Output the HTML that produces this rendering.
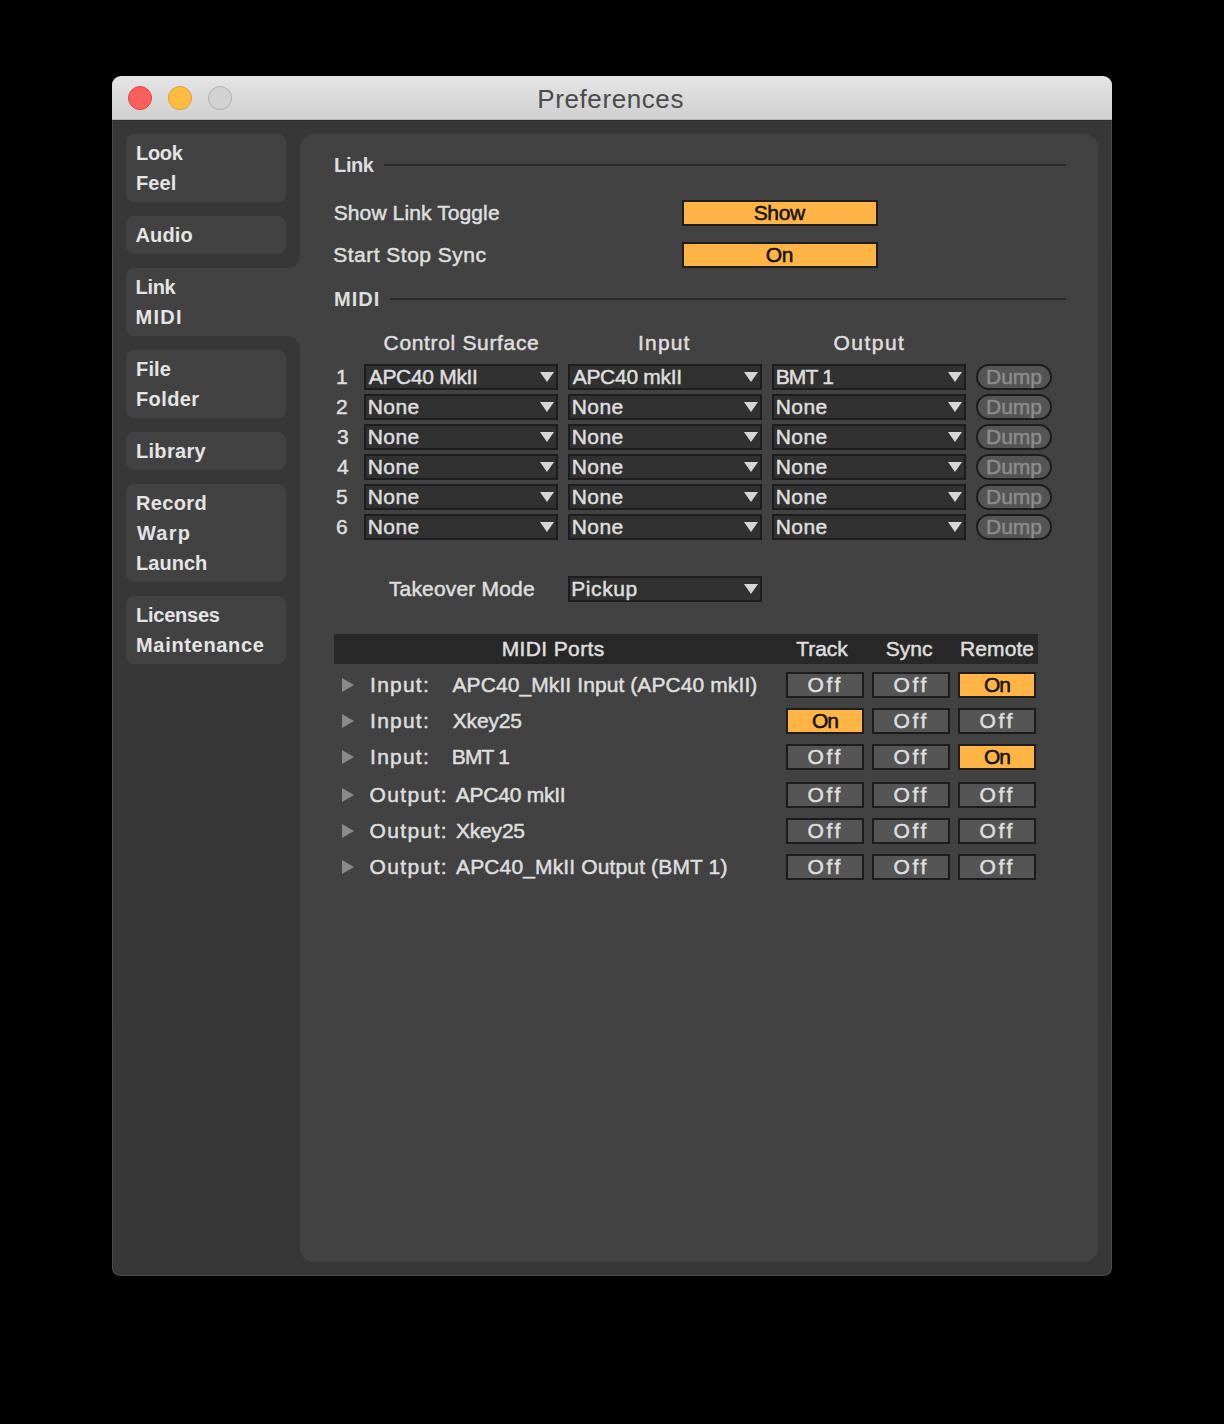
<!DOCTYPE html><html><head><meta charset='utf-8'><title>Preferences</title><style>
*{box-sizing:border-box;margin:0;padding:0}
html,body{width:1224px;height:1424px;background:#000;overflow:hidden}
body{position:relative;font-family:"Liberation Sans",sans-serif}
.a{position:absolute}
.t{position:absolute;white-space:pre;line-height:1;-webkit-text-stroke:0.5px currentColor;font-variant-ligatures:none}
.win{position:absolute;left:112px;top:76px;width:1000px;height:1200px;border-radius:9px 9px 8px 8px;background:#373737;overflow:hidden}
.title{position:absolute;left:0;top:0;width:1000px;height:44px;background:linear-gradient(#e5e5e5,#cfcfcf);}
.light{position:absolute;width:24px;height:24px;border-radius:50%;top:10px}
.item{position:absolute;left:14px;width:160px;background:#424242;border-radius:8px}
.dd{position:absolute;width:194px;height:26px;background:#313131;border:2px solid #1d1d1d}
.dd i{position:absolute;right:2px;top:6px;width:0;height:0;border-left:7px solid transparent;border-right:7px solid transparent;border-top:10px solid #d6d6d6}
.btn{position:absolute;width:78px;height:26px;border:2px solid #1d1d1d}
.off{background:#555555}
.on{background:#ffb446}
.dump{position:absolute;left:864px;width:76px;height:26px;border:2px solid #1d1d1d;border-radius:13px;background:#555555}
.tri{position:absolute;left:230px;width:0;height:0;border-top:7px solid transparent;border-bottom:7px solid transparent;border-left:12px solid #8a8a8a}
</style></head><body>
<div class='win'>
<div class='title'>
<div class='a' style='left:0;top:43px;width:1000px;height:1px;background:#b8b8b8'></div>
<div class='light' style='left:16px;background:#fc605c;border:1px solid #df4744'></div>
<div class='light' style='left:56px;background:#fdbc40;border:1px solid #dea034'></div>
<div class='light' style='left:96px;background:#d2d2d2;border:1px solid #b0b0b0'></div>
</div>
<div class='a' style='left:188px;top:58px;width:798px;height:1128px;border-radius:14px;background:#424242'></div>
<div class='a' style='left:14px;top:192px;width:174px;height:68px;border-radius:8px 0 0 8px;background:#424242'></div>
<div class='a' style='left:175px;top:179px;width:13px;height:13px;background:#424242'></div>
<div class='a' style='left:175px;top:179px;width:13px;height:13px;background:#373737;border-radius:0 0 13px 0'></div>
<div class='a' style='left:175px;top:260px;width:13px;height:13px;background:#424242'></div>
<div class='a' style='left:175px;top:260px;width:13px;height:13px;background:#373737;border-radius:0 13px 0 0'></div>
<div class='item' style='top:58px;height:68px'></div>
<div class='item' style='top:140px;height:38px'></div>
<div class='item' style='top:274px;height:68px'></div>
<div class='item' style='top:356px;height:38px'></div>
<div class='item' style='top:408px;height:98px'></div>
<div class='item' style='top:520px;height:68px'></div>
<div class='a' style='left:0;top:44px;width:1000px;height:1px;background:#2e2e2e'></div>
<div class='a' style='left:0;top:44px;width:1000px;height:1156px;border:1px solid rgba(255,255,255,0.1);border-top:0;border-radius:0 0 8px 8px'></div>
<div class='a' style='left:272px;top:88px;width:682px;height:2px;background:#2a2a2a'></div>
<div class='a' style='left:278px;top:222px;width:676px;height:2px;background:#2a2a2a'></div>
<div class='btn on' style='left:570px;top:124px;width:196px'></div>
<div class='btn on' style='left:570px;top:166px;width:196px'></div>
<div class='dd' style='left:252px;top:288px'><i></i></div>
<div class='dd' style='left:456px;top:288px'><i></i></div>
<div class='dd' style='left:660px;top:288px'><i></i></div>
<div class='dump' style='top:288px'></div>
<div class='dd' style='left:252px;top:318px'><i></i></div>
<div class='dd' style='left:456px;top:318px'><i></i></div>
<div class='dd' style='left:660px;top:318px'><i></i></div>
<div class='dump' style='top:318px'></div>
<div class='dd' style='left:252px;top:348px'><i></i></div>
<div class='dd' style='left:456px;top:348px'><i></i></div>
<div class='dd' style='left:660px;top:348px'><i></i></div>
<div class='dump' style='top:348px'></div>
<div class='dd' style='left:252px;top:378px'><i></i></div>
<div class='dd' style='left:456px;top:378px'><i></i></div>
<div class='dd' style='left:660px;top:378px'><i></i></div>
<div class='dump' style='top:378px'></div>
<div class='dd' style='left:252px;top:408px'><i></i></div>
<div class='dd' style='left:456px;top:408px'><i></i></div>
<div class='dd' style='left:660px;top:408px'><i></i></div>
<div class='dump' style='top:408px'></div>
<div class='dd' style='left:252px;top:438px'><i></i></div>
<div class='dd' style='left:456px;top:438px'><i></i></div>
<div class='dd' style='left:660px;top:438px'><i></i></div>
<div class='dump' style='top:438px'></div>
<div class='dd' style='left:456px;top:500px'><i></i></div>
<div class='a' style='left:222px;top:558px;width:704px;height:30px;background:#282828'></div>
<div class='tri' style='top:602px'></div>
<div class='btn off' style='left:674px;top:596px'></div>
<div class='btn off' style='left:760px;top:596px'></div>
<div class='btn on' style='left:846px;top:596px'></div>
<div class='tri' style='top:638px'></div>
<div class='btn on' style='left:674px;top:632px'></div>
<div class='btn off' style='left:760px;top:632px'></div>
<div class='btn off' style='left:846px;top:632px'></div>
<div class='tri' style='top:674px'></div>
<div class='btn off' style='left:674px;top:668px'></div>
<div class='btn off' style='left:760px;top:668px'></div>
<div class='btn on' style='left:846px;top:668px'></div>
<div class='tri' style='top:712px'></div>
<div class='btn off' style='left:674px;top:706px'></div>
<div class='btn off' style='left:760px;top:706px'></div>
<div class='btn off' style='left:846px;top:706px'></div>
<div class='tri' style='top:748px'></div>
<div class='btn off' style='left:674px;top:742px'></div>
<div class='btn off' style='left:760px;top:742px'></div>
<div class='btn off' style='left:846px;top:742px'></div>
<div class='tri' style='top:784px'></div>
<div class='btn off' style='left:674px;top:778px'></div>
<div class='btn off' style='left:760px;top:778px'></div>
<div class='btn off' style='left:846px;top:778px'></div>
<div class='t' id='t0' style='left:24.00px;top:67.07px;font-size:20px;font-weight:700;color:#e4e4e4;letter-spacing:-0.30px;-webkit-text-stroke:0;'>Look</div>
<div class='t' id='t1' style='left:24.00px;top:97.07px;font-size:20px;font-weight:700;color:#e4e4e4;letter-spacing:0.07px;-webkit-text-stroke:0;'>Feel</div>
<div class='t' id='t2' style='left:23.50px;top:149.07px;font-size:20px;font-weight:700;color:#e4e4e4;letter-spacing:0.12px;-webkit-text-stroke:0;'>Audio</div>
<div class='t' id='t3' style='left:23.60px;top:201.07px;font-size:20px;font-weight:700;color:#e4e4e4;letter-spacing:-0.33px;-webkit-text-stroke:0;'>Link</div>
<div class='t' id='t4' style='left:23.60px;top:231.07px;font-size:20px;font-weight:700;color:#e4e4e4;letter-spacing:1.23px;-webkit-text-stroke:0;'>MIDI</div>
<div class='t' id='t5' style='left:24.00px;top:283.07px;font-size:20px;font-weight:700;color:#e4e4e4;letter-spacing:0.17px;-webkit-text-stroke:0;'>File</div>
<div class='t' id='t6' style='left:24.00px;top:313.07px;font-size:20px;font-weight:700;color:#e4e4e4;letter-spacing:0.40px;-webkit-text-stroke:0;'>Folder</div>
<div class='t' id='t7' style='left:24.00px;top:365.07px;font-size:20px;font-weight:700;color:#e4e4e4;letter-spacing:0.30px;-webkit-text-stroke:0;'>Library</div>
<div class='t' id='t8' style='left:24.00px;top:417.07px;font-size:20px;font-weight:700;color:#e4e4e4;letter-spacing:0.36px;-webkit-text-stroke:0;'>Record</div>
<div class='t' id='t9' style='left:25.00px;top:447.07px;font-size:20px;font-weight:700;color:#e4e4e4;letter-spacing:1.20px;-webkit-text-stroke:0;'>Warp</div>
<div class='t' id='t10' style='left:24.00px;top:477.07px;font-size:20px;font-weight:700;color:#e4e4e4;letter-spacing:0.04px;-webkit-text-stroke:0;'>Launch</div>
<div class='t' id='t11' style='left:24.00px;top:529.07px;font-size:20px;font-weight:700;color:#e4e4e4;letter-spacing:-0.23px;-webkit-text-stroke:0;'>Licenses</div>
<div class='t' id='t12' style='left:24.00px;top:559.07px;font-size:20px;font-weight:700;color:#e4e4e4;letter-spacing:0.68px;-webkit-text-stroke:0;'>Maintenance</div>
<div class='t' id='t13' style='left:425.30px;top:9.99px;font-size:26px;font-weight:400;color:#4b4b4b;letter-spacing:0.59px;-webkit-text-stroke:0;'>Preferences</div>
<div class='t' id='t14' style='left:222.10px;top:79.07px;font-size:20px;font-weight:700;color:#dedede;letter-spacing:-0.43px;-webkit-text-stroke:0;'>Link</div>
<div class='t' id='t15' style='left:222.00px;top:213.07px;font-size:20px;font-weight:700;color:#dedede;letter-spacing:1.00px;-webkit-text-stroke:0;'>MIDI</div>
<div class='t' id='t16' style='left:221.70px;top:126.22px;font-size:21px;font-weight:400;color:#dedede;letter-spacing:0.11px;'>Show Link Toggle</div>
<div class='t' id='t17' style='left:221.20px;top:168.22px;font-size:21px;font-weight:400;color:#dedede;letter-spacing:0.49px;'>Start Stop Sync</div>
<div class='t' id='t18' style='left:271.60px;top:256.22px;font-size:21px;font-weight:400;color:#dedede;letter-spacing:0.66px;'>Control Surface</div>
<div class='t' id='t19' style='left:526.10px;top:256.22px;font-size:21px;font-weight:400;color:#dedede;letter-spacing:1.15px;'>Input</div>
<div class='t' id='t20' style='left:721.60px;top:256.22px;font-size:21px;font-weight:400;color:#dedede;letter-spacing:1.44px;'>Output</div>
<div class='t' id='t21' style='left:641.70px;top:126.22px;font-size:21px;font-weight:400;color:#111111;letter-spacing:-0.33px;'>Show</div>
<div class='t' id='t22' style='left:653.80px;top:168.22px;font-size:21px;font-weight:400;color:#111111;letter-spacing:-0.50px;'>On</div>
<div class='t' id='t23' style='left:224.00px;top:290.22px;font-size:21px;font-weight:400;color:#dedede;letter-spacing:0.00px;'>1</div>
<div class='t' id='t24' style='left:256.70px;top:290.22px;font-size:21px;font-weight:400;color:#dedede;letter-spacing:-0.31px;'>APC40 MkII</div>
<div class='t' id='t25' style='left:460.70px;top:290.22px;font-size:21px;font-weight:400;color:#dedede;letter-spacing:-0.29px;'>APC40 mkII</div>
<div class='t' id='t26' style='left:663.70px;top:290.22px;font-size:21px;font-weight:400;color:#dedede;letter-spacing:-0.82px;'>BMT 1</div>
<div class='t' id='t27' style='left:874.00px;top:290.22px;font-size:21px;font-weight:400;color:#8c8c8c;letter-spacing:0.00px;'>Dump</div>
<div class='t' id='t28' style='left:224.00px;top:320.22px;font-size:21px;font-weight:400;color:#dedede;letter-spacing:0.00px;'>2</div>
<div class='t' id='t29' style='left:255.70px;top:320.22px;font-size:21px;font-weight:400;color:#dedede;letter-spacing:0.47px;'>None</div>
<div class='t' id='t30' style='left:459.70px;top:320.22px;font-size:21px;font-weight:400;color:#dedede;letter-spacing:0.47px;'>None</div>
<div class='t' id='t31' style='left:663.70px;top:320.22px;font-size:21px;font-weight:400;color:#dedede;letter-spacing:0.47px;'>None</div>
<div class='t' id='t32' style='left:874.00px;top:320.22px;font-size:21px;font-weight:400;color:#8c8c8c;letter-spacing:0.00px;'>Dump</div>
<div class='t' id='t33' style='left:225.00px;top:350.22px;font-size:21px;font-weight:400;color:#dedede;letter-spacing:0.00px;'>3</div>
<div class='t' id='t34' style='left:255.70px;top:350.22px;font-size:21px;font-weight:400;color:#dedede;letter-spacing:0.47px;'>None</div>
<div class='t' id='t35' style='left:459.70px;top:350.22px;font-size:21px;font-weight:400;color:#dedede;letter-spacing:0.47px;'>None</div>
<div class='t' id='t36' style='left:663.70px;top:350.22px;font-size:21px;font-weight:400;color:#dedede;letter-spacing:0.47px;'>None</div>
<div class='t' id='t37' style='left:874.00px;top:350.22px;font-size:21px;font-weight:400;color:#8c8c8c;letter-spacing:0.00px;'>Dump</div>
<div class='t' id='t38' style='left:225.00px;top:380.22px;font-size:21px;font-weight:400;color:#dedede;letter-spacing:0.00px;'>4</div>
<div class='t' id='t39' style='left:255.70px;top:380.22px;font-size:21px;font-weight:400;color:#dedede;letter-spacing:0.47px;'>None</div>
<div class='t' id='t40' style='left:459.70px;top:380.22px;font-size:21px;font-weight:400;color:#dedede;letter-spacing:0.47px;'>None</div>
<div class='t' id='t41' style='left:663.70px;top:380.22px;font-size:21px;font-weight:400;color:#dedede;letter-spacing:0.47px;'>None</div>
<div class='t' id='t42' style='left:874.00px;top:380.22px;font-size:21px;font-weight:400;color:#8c8c8c;letter-spacing:0.00px;'>Dump</div>
<div class='t' id='t43' style='left:224.00px;top:410.22px;font-size:21px;font-weight:400;color:#dedede;letter-spacing:0.00px;'>5</div>
<div class='t' id='t44' style='left:255.70px;top:410.22px;font-size:21px;font-weight:400;color:#dedede;letter-spacing:0.47px;'>None</div>
<div class='t' id='t45' style='left:459.70px;top:410.22px;font-size:21px;font-weight:400;color:#dedede;letter-spacing:0.47px;'>None</div>
<div class='t' id='t46' style='left:663.70px;top:410.22px;font-size:21px;font-weight:400;color:#dedede;letter-spacing:0.47px;'>None</div>
<div class='t' id='t47' style='left:874.00px;top:410.22px;font-size:21px;font-weight:400;color:#8c8c8c;letter-spacing:0.00px;'>Dump</div>
<div class='t' id='t48' style='left:224.00px;top:440.22px;font-size:21px;font-weight:400;color:#dedede;letter-spacing:0.00px;'>6</div>
<div class='t' id='t49' style='left:255.70px;top:440.22px;font-size:21px;font-weight:400;color:#dedede;letter-spacing:0.47px;'>None</div>
<div class='t' id='t50' style='left:459.70px;top:440.22px;font-size:21px;font-weight:400;color:#dedede;letter-spacing:0.47px;'>None</div>
<div class='t' id='t51' style='left:663.70px;top:440.22px;font-size:21px;font-weight:400;color:#dedede;letter-spacing:0.47px;'>None</div>
<div class='t' id='t52' style='left:874.00px;top:440.22px;font-size:21px;font-weight:400;color:#8c8c8c;letter-spacing:0.00px;'>Dump</div>
<div class='t' id='t53' style='left:276.90px;top:502.22px;font-size:21px;font-weight:400;color:#dedede;letter-spacing:0.18px;'>Takeover Mode</div>
<div class='t' id='t54' style='left:459.30px;top:502.22px;font-size:21px;font-weight:400;color:#dedede;letter-spacing:0.56px;'>Pickup</div>
<div class='t' id='t55' style='left:389.70px;top:562.22px;font-size:21px;font-weight:400;color:#dedede;letter-spacing:0.37px;'>MIDI Ports</div>
<div class='t' id='t56' style='left:684.30px;top:562.22px;font-size:21px;font-weight:400;color:#dedede;letter-spacing:-0.07px;'>Track</div>
<div class='t' id='t57' style='left:773.70px;top:562.22px;font-size:21px;font-weight:400;color:#dedede;letter-spacing:0.03px;'>Sync</div>
<div class='t' id='t58' style='left:848.00px;top:562.22px;font-size:21px;font-weight:400;color:#dedede;letter-spacing:0.10px;'>Remote</div>
<div class='t' id='t59' style='left:258.10px;top:598.22px;font-size:21px;font-weight:400;color:#dedede;letter-spacing:1.22px;'>Input:</div>
<div class='t' id='t60' style='left:340.50px;top:598.22px;font-size:21px;font-weight:400;color:#dedede;letter-spacing:0.09px;'>APC40_MkII Input (APC40 mkII)</div>
<div class='t' id='t61' style='left:695.60px;top:598.22px;font-size:21px;font-weight:400;color:#dedede;letter-spacing:2.55px;'>Off</div>
<div class='t' id='t62' style='left:781.60px;top:598.22px;font-size:21px;font-weight:400;color:#dedede;letter-spacing:2.55px;'>Off</div>
<div class='t' id='t63' style='left:872.00px;top:598.22px;font-size:21px;font-weight:400;color:#111111;letter-spacing:-1.00px;'>On</div>
<div class='t' id='t64' style='left:258.10px;top:634.22px;font-size:21px;font-weight:400;color:#dedede;letter-spacing:1.22px;'>Input:</div>
<div class='t' id='t65' style='left:340.80px;top:634.22px;font-size:21px;font-weight:400;color:#dedede;letter-spacing:-0.20px;'>Xkey25</div>
<div class='t' id='t66' style='left:700.00px;top:634.22px;font-size:21px;font-weight:400;color:#111111;letter-spacing:-1.00px;'>On</div>
<div class='t' id='t67' style='left:781.60px;top:634.22px;font-size:21px;font-weight:400;color:#dedede;letter-spacing:2.55px;'>Off</div>
<div class='t' id='t68' style='left:867.60px;top:634.22px;font-size:21px;font-weight:400;color:#dedede;letter-spacing:2.55px;'>Off</div>
<div class='t' id='t69' style='left:258.10px;top:670.22px;font-size:21px;font-weight:400;color:#dedede;letter-spacing:1.22px;'>Input:</div>
<div class='t' id='t70' style='left:339.80px;top:670.22px;font-size:21px;font-weight:400;color:#dedede;letter-spacing:-0.85px;'>BMT 1</div>
<div class='t' id='t71' style='left:695.60px;top:670.22px;font-size:21px;font-weight:400;color:#dedede;letter-spacing:2.55px;'>Off</div>
<div class='t' id='t72' style='left:781.60px;top:670.22px;font-size:21px;font-weight:400;color:#dedede;letter-spacing:2.55px;'>Off</div>
<div class='t' id='t73' style='left:872.00px;top:670.22px;font-size:21px;font-weight:400;color:#111111;letter-spacing:-1.00px;'>On</div>
<div class='t' id='t74' style='left:257.60px;top:708.22px;font-size:21px;font-weight:400;color:#dedede;letter-spacing:1.37px;'>Output:</div>
<div class='t' id='t75' style='left:343.80px;top:708.22px;font-size:21px;font-weight:400;color:#dedede;letter-spacing:-0.24px;'>APC40 mkII</div>
<div class='t' id='t76' style='left:695.60px;top:708.22px;font-size:21px;font-weight:400;color:#dedede;letter-spacing:2.55px;'>Off</div>
<div class='t' id='t77' style='left:781.60px;top:708.22px;font-size:21px;font-weight:400;color:#dedede;letter-spacing:2.55px;'>Off</div>
<div class='t' id='t78' style='left:867.60px;top:708.22px;font-size:21px;font-weight:400;color:#dedede;letter-spacing:2.55px;'>Off</div>
<div class='t' id='t79' style='left:257.60px;top:744.22px;font-size:21px;font-weight:400;color:#dedede;letter-spacing:1.37px;'>Output:</div>
<div class='t' id='t80' style='left:344.00px;top:744.22px;font-size:21px;font-weight:400;color:#dedede;letter-spacing:-0.20px;'>Xkey25</div>
<div class='t' id='t81' style='left:695.60px;top:744.22px;font-size:21px;font-weight:400;color:#dedede;letter-spacing:2.55px;'>Off</div>
<div class='t' id='t82' style='left:781.60px;top:744.22px;font-size:21px;font-weight:400;color:#dedede;letter-spacing:2.55px;'>Off</div>
<div class='t' id='t83' style='left:867.60px;top:744.22px;font-size:21px;font-weight:400;color:#dedede;letter-spacing:2.55px;'>Off</div>
<div class='t' id='t84' style='left:257.60px;top:780.22px;font-size:21px;font-weight:400;color:#dedede;letter-spacing:1.37px;'>Output:</div>
<div class='t' id='t85' style='left:344.00px;top:780.22px;font-size:21px;font-weight:400;color:#dedede;letter-spacing:0.14px;'>APC40_MkII Output (BMT 1)</div>
<div class='t' id='t86' style='left:695.60px;top:780.22px;font-size:21px;font-weight:400;color:#dedede;letter-spacing:2.55px;'>Off</div>
<div class='t' id='t87' style='left:781.60px;top:780.22px;font-size:21px;font-weight:400;color:#dedede;letter-spacing:2.55px;'>Off</div>
<div class='t' id='t88' style='left:867.60px;top:780.22px;font-size:21px;font-weight:400;color:#dedede;letter-spacing:2.55px;'>Off</div>
</div></body></html>
